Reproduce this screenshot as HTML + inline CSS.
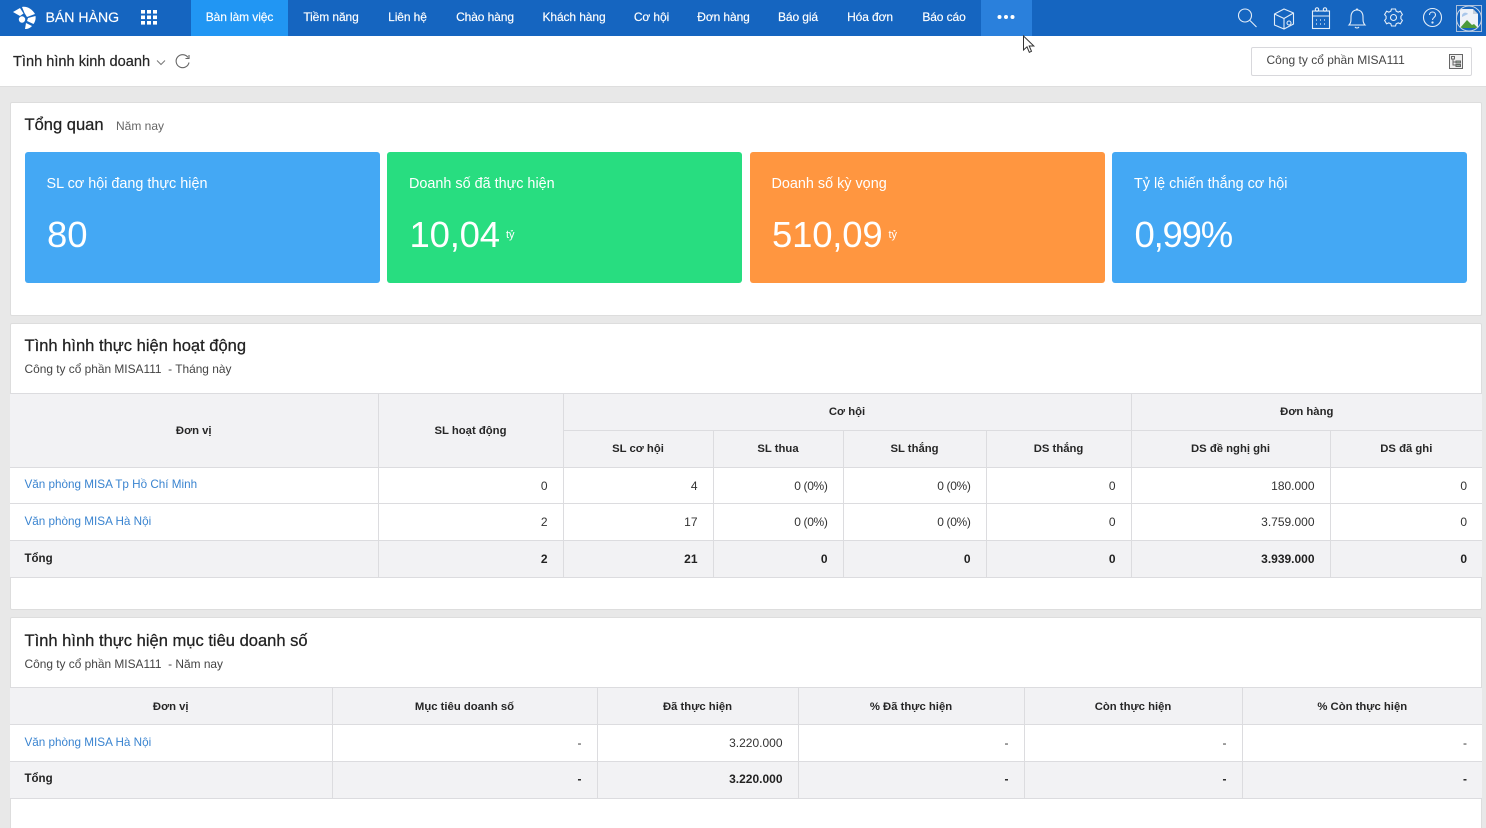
<!DOCTYPE html>
<html lang="vi"><head><meta charset="utf-8"><title>Tình hình kinh doanh</title>
<style>
*{box-sizing:border-box}
html,body{margin:0;padding:0;width:1486px;height:828px;overflow:hidden;background:#e8e8e8;font-family:"Liberation Sans",sans-serif;color:#212121}
#w{position:relative;width:1486px;height:828px;overflow:hidden}
.a{position:absolute;white-space:nowrap}
.nav{position:absolute;left:0;top:0;width:1486px;height:36px;background:#1565c0}
.n{position:absolute;top:0;height:36px;line-height:35px;color:#fff;font-size:12px;transform:translateX(-50%);white-space:nowrap;letter-spacing:-.1px;-webkit-text-stroke:.15px #fff}
.card{position:absolute;left:9.500px;width:1472.500px;background:#fff;border:1px solid #ddd;border-radius:2px}
.h{font-size:16.550px;line-height:20px;color:#222;-webkit-text-stroke:.25px #222}
.s{font-size:11.900px;line-height:15px;color:#444}
.k{position:absolute;top:152px;width:355px;height:131px;border-radius:3px;color:#fff}
.k .t{position:absolute;left:22px;top:24px;font-size:14.400px;white-space:nowrap}
.k .v{position:absolute;left:22.500px;top:60px;font-size:36.500px;line-height:46px;white-space:nowrap}
.k .u{position:absolute;top:77px;font-size:11px;white-space:nowrap}
table{position:absolute;left:10px;border-collapse:collapse;table-layout:fixed;font-size:12px}
th,td{border:1px solid #dcdcdf;padding:0;height:37px;overflow:hidden;white-space:nowrap}
th{background:#f2f2f4;font-weight:bold;font-size:11.300px;text-align:center;color:#262626}
td{text-align:right;padding-right:15px;background:#fff;color:#333}
td:first-child{text-align:left;padding-left:14.500px;padding-right:0;color:#3a84d0;border-left:0;padding-bottom:2px;font-size:11.700px}
th:first-child{border-left:0}
th:last-child,td:last-child{border-right:0}
.tot td{background:#f2f2f4;font-weight:bold;color:#222}
.tot td:first-child{color:#222;font-size:11.500px;padding-bottom:1px}
.p{letter-spacing:-.35px}
.t2 th{padding-top:1px}
.t2 .tot td{padding-bottom:2px}
.t2 .tot td:first-child{padding-bottom:3px}
</style></head><body><div id="w">
<div class="nav"></div>
<svg class="a" style="left:12px;top:6px" width="24" height="23" viewBox="0 0 24 23" fill="#fff">
<path d="M1 6 L8 2 L11.500 7.500 L8 10 Z"/><path d="M10 1 C15 0 20 3 23 8 L15 11 L12.500 7 Z"/><circle cx="10" cy="13.500" r="3.200"/><path d="M16 12 L23.500 10 C24 13 23 16 21.500 18 L15 15 Z"/><path d="M14 17 L20 20 C18 22 16 23 13 23 Z"/></svg>
<div class="a" style="left:45.500px;top:9px;font-size:14.100px;line-height:17px;color:#fff;-webkit-text-stroke:.15px #fff">BÁN HÀNG</div>
<svg class="a" style="left:141px;top:10px" width="16" height="15" fill="#fff"><rect x="0" y="0" width="4" height="3.600"/><rect x="6" y="0" width="4" height="3.600"/><rect x="12" y="0" width="4" height="3.600"/><rect x="0" y="5.500" width="4" height="3.600"/><rect x="6" y="5.500" width="4" height="3.600"/><rect x="12" y="5.500" width="4" height="3.600"/><rect x="0" y="11" width="4" height="3.600"/><rect x="6" y="11" width="4" height="3.600"/><rect x="12" y="11" width="4" height="3.600"/></svg>
<div class="a" style="left:191px;top:0;width:97px;height:36px;background:#2196f3"></div>
<div class="a" style="left:981px;top:0;width:51px;height:36px;background:#2a80dc"></div>
<div class="n" style="left:239.500px">Bàn làm việc</div>
<div class="n" style="left:331px">Tiềm năng</div>
<div class="n" style="left:407.500px">Liên hệ</div>
<div class="n" style="left:485px">Chào hàng</div>
<div class="n" style="left:574px">Khách hàng</div>
<div class="n" style="left:651.500px">Cơ hội</div>
<div class="n" style="left:723.500px">Đơn hàng</div>
<div class="n" style="left:798px">Báo giá</div>
<div class="n" style="left:870px">Hóa đơn</div>
<div class="n" style="left:944px">Báo cáo</div>
<svg class="a" style="left:997px;top:14px" width="18" height="6" fill="#fff"><circle cx="2.500" cy="3" r="2"/><circle cx="9" cy="3" r="2"/><circle cx="15.500" cy="3" r="2"/></svg>
<svg class="a" style="left:1236px;top:6px" width="220" height="26" fill="none" stroke="#e3edf8" stroke-width="1.100">
<circle cx="9" cy="9.500" r="6.500"/><path d="M14 14.500l6.500 6.500"/>
<path d="M38.500 8l9.500-5 9.500 4v11l-9.500 5-9.500-4zM38.500 8l9.500 4.500 9.500-5.500M48 12.500v10.500"/><circle cx="53" cy="17" r="2"/>
<rect x="76.500" y="5" width="17" height="17.500"/><path d="M76.500 10h17"/><circle cx="81" cy="3.500" r="1.700"/><circle cx="89" cy="3.500" r="1.700"/><path d="M80 14h1m3 0h1m3 0h1M80 18h1m3 0h1m3 0h1" stroke-width="1.300"/>
<path d="M113 19c2-2 2-4 2-8 0-4 2-7 6-7s6 3 6 7c0 4 0 6 2 8zM120 3.500a1.500 1.500 0 012 0M119 21a2.500 2.500 0 004 0"/>
<circle cx="157.500" cy="11.500" r="3"/><path d="M155.500 3h4l.7 2.200 2 .9 2.200-.9 2 3.400-1.500 1.700v2.400l1.500 1.700-2 3.400-2.200-.9-2 .9-.7 2.200h-4l-.7-2.200-2-.9-2.200.9-2-3.400 1.500-1.700v-2.400l-1.500-1.700 2-3.400 2.200.9 2-.9z"/>
<circle cx="196.500" cy="11.500" r="9"/><path d="M193.500 9c0-4 6-4 6 0 0 2.500-3 2.500-3 5"/><circle cx="196.500" cy="16.500" r=".6" fill="#fff"/>
</svg>
<svg class="a" style="left:1456px;top:5px" width="27" height="27"><rect x=".5" y=".5" width="25" height="26" fill="#1565c0" stroke="#a9bedb"/><path d="M4 4h13l5 5v14H4z" fill="#eef2f8"/><path d="M17 4v5h5" fill="#c4cfdc"/><path d="M4 23l7-8 5 5 2-1 4 4z" fill="#4c9a3c"/><path d="M6 10c1-3 5-3 6-1l-6 3z" fill="#a9c7ea"/><circle cx="13" cy="13.500" r="12.500" fill="none" stroke="#c4d4e8"/></svg>

<div class="a" style="left:0;top:36px;width:1486px;height:51px;background:#fff;border-bottom:1px solid #dedede"></div>
<svg class="a" style="left:1022px;top:35px" width="14" height="19"><path d="M1.500 1v14l3.500-3.200 2.300 5.500 2.200-1-2.300-5.300h4.600z" fill="#fff" stroke="#333" stroke-width="1"/></svg>
<div class="a" style="left:13px;top:53px;font-size:14.600px;line-height:18px;color:#262626;-webkit-text-stroke:.2px #262626">Tình hình kinh doanh</div>
<svg class="a" style="left:156px;top:59px" width="10" height="7" fill="none" stroke="#777"><path d="M1 1.500l4 4 4-4"/></svg>
<svg class="a" style="left:174px;top:53px" width="17" height="17" fill="none" stroke="#666" stroke-width="1.100"><path d="M14 4.500A6.500 6.500 0 1 0 15 9.500"/><path d="M15 2v3.500h-3.500"/></svg>
<div class="a" style="left:1251px;top:47px;width:221px;height:29px;background:#fff;border:1px solid #d8d8dc;border-radius:2px"></div>
<div class="a" style="left:1266.500px;top:53px;font-size:12px;line-height:15px;color:#444">Công ty cổ phần MISA111</div>
<svg class="a" style="left:1449px;top:54px" width="14" height="15" fill="none" stroke="#666"><rect x=".5" y=".5" width="13" height="14" fill="#f0f0f0"/><rect x="2.500" y="2.500" width="3" height="2.500"/><path d="M4 5v6h3M4 8h3"/><rect x="7" y="7" width="4.500" height="2" fill="#9ab0a0"/><rect x="7" y="10.500" width="4.500" height="2" fill="#9ab0a0"/></svg>

<div class="card" style="top:102px;height:214px"></div>
<div class="a h" style="left:24.500px;top:115px">Tổng quan</div>
<div class="a" style="left:116px;top:119px;font-size:12px;line-height:14px;color:#666">Năm nay</div>

<div class="k" style="left:24.500px;background:#44a8f4"><div class="t">SL cơ hội đang thực hiện</div><div class="v">80</div></div>
<div class="k" style="left:387px;background:#28dd80"><div class="t">Doanh số đã thực hiện</div><div class="v" style="letter-spacing:-.2px">10,04</div><div class="u" style="left:119px">tỷ</div></div>
<div class="k" style="left:749.500px;background:#ff9640"><div class="t">Doanh số kỳ vọng</div><div class="v" style="letter-spacing:-.2px">510,09</div><div class="u" style="left:139px">tỷ</div></div>
<div class="k" style="left:1112px;background:#44a8f4"><div class="t">Tỷ lệ chiến thắng cơ hội</div><div class="v" style="letter-spacing:-1.200px">0,99%</div></div>

<div class="card" style="top:323px;height:287px"></div>
<div class="a h" style="left:24.500px;top:336px">Tình hình thực hiện hoạt động</div>
<div class="a s" style="left:24.500px;top:362px">Công ty cổ phần MISA111 &nbsp;- Tháng này</div>
<table style="top:393px;width:1472px">
<colgroup><col style="width:368px"><col style="width:185px"><col style="width:150px"><col style="width:130px"><col style="width:143px"><col style="width:145px"><col style="width:199px"><col style="width:152px"></colgroup>
<tr><th rowspan="2">Đơn vị</th><th rowspan="2">SL hoạt động</th><th colspan="4">Cơ hội</th><th colspan="2">Đơn hàng</th></tr>
<tr><th>SL cơ hội</th><th>SL thua</th><th>SL thắng</th><th>DS thắng</th><th>DS đề nghị ghi</th><th>DS đã ghi</th></tr>
<tr><td style="height:36px">Văn phòng MISA Tp Hồ Chí Minh</td><td style="height:36px">0</td><td style="height:36px">4</td><td style="height:36px" class="p">0 (0%)</td><td style="height:36px" class="p">0 (0%)</td><td style="height:36px">0</td><td style="height:36px">180.000</td><td style="height:36px">0</td></tr>
<tr><td>Văn phòng MISA Hà Nội</td><td>2</td><td>17</td><td class="p">0 (0%)</td><td class="p">0 (0%)</td><td>0</td><td>3.759.000</td><td>0</td></tr>
<tr class="tot"><td>Tổng</td><td>2</td><td>21</td><td>0</td><td>0</td><td>0</td><td>3.939.000</td><td>0</td></tr>
</table>

<div class="card" style="top:617px;height:230px"></div>
<div class="a h" style="left:24.500px;top:630.500px">Tình hình thực hiện mục tiêu doanh số</div>
<div class="a s" style="left:24.500px;top:656.500px">Công ty cổ phần MISA111 &nbsp;- Năm nay</div>
<table class="t2" style="top:687px;width:1472px">
<colgroup><col style="width:322px"><col style="width:265px"><col style="width:201px"><col style="width:226px"><col style="width:218px"><col style="width:240px"></colgroup>
<tr><th>Đơn vị</th><th>Mục tiêu doanh số</th><th>Đã thực hiện</th><th>% Đã thực hiện</th><th>Còn thực hiện</th><th>% Còn thực hiện</th></tr>
<tr><td>Văn phòng MISA Hà Nội</td><td>-</td><td>3.220.000</td><td>-</td><td>-</td><td>-</td></tr>
<tr class="tot"><td>Tổng</td><td>-</td><td>3.220.000</td><td>-</td><td>-</td><td>-</td></tr>
</table>
</div></body></html>
